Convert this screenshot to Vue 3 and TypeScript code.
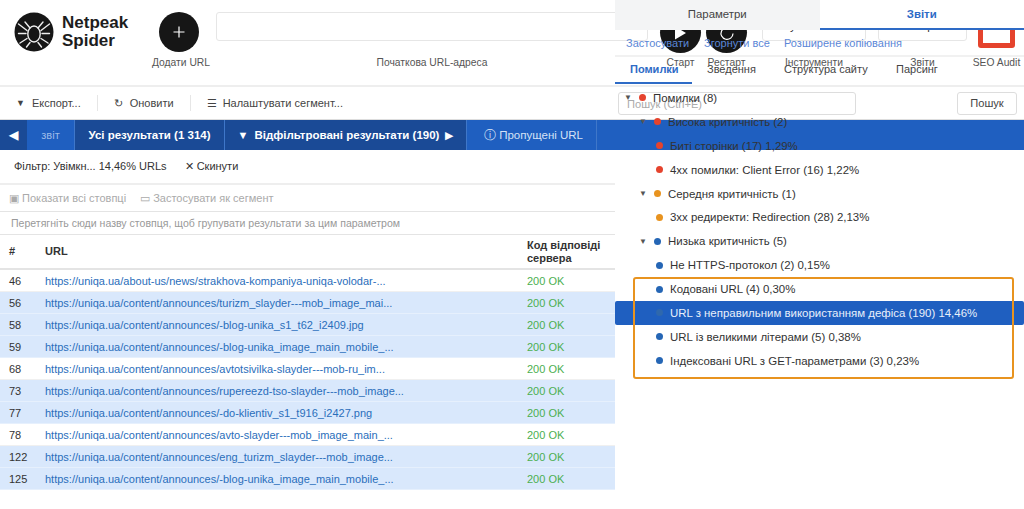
<script setup lang="ts">
interface Row {
  id: number
  url: string
  picked: boolean
}

interface TreeItem {
  label: string
  dot: string
  level: number
  arrow?: boolean
}

const rows: Row[] = [
  { id: 46, url: 'https://uniqa.ua/about-us/news/strakhova-kompaniya-uniqa-volodar-...', picked: false },
  { id: 56, url: 'https://uniqa.ua/content/announces/turizm_slayder---mob_image_mai...', picked: true },
  { id: 58, url: 'https://uniqa.ua/content/announces/-blog-unika_s1_t62_i2409.jpg', picked: true },
  { id: 59, url: 'https://uniqa.ua/content/announces/-blog-unika_image_main_mobile_...', picked: true },
  { id: 68, url: 'https://uniqa.ua/content/announces/avtotsivilka-slayder---mob-ru_im...', picked: false },
  { id: 73, url: 'https://uniqa.ua/content/announces/rupereezd-tso-slayder---mob_image...', picked: true },
  { id: 77, url: 'https://uniqa.ua/content/announces/-do-klientiv_s1_t916_i2427.png', picked: true },
  { id: 78, url: 'https://uniqa.ua/content/announces/avto-slayder---mob_image_main_...', picked: false },
  { id: 122, url: 'https://uniqa.ua/content/announces/eng_turizm_slayder---mob_image...', picked: true },
  { id: 125, url: 'https://uniqa.ua/content/announces/-blog-unika_image_main_mobile_...', picked: true },
]

const red = '#e5432d'
const orange = '#e8931f'
const blue = '#2566b5'

const tree: TreeItem[] = [
  { label: 'Помилки (8)', dot: red, level: 0, arrow: true },
  { label: 'Висока критичність (2)', dot: red, level: 1, arrow: true },
  { label: 'Биті сторінки (17) 1,29%', dot: red, level: 2 },
  { label: '4xx помилки: Client Error (16) 1,22%', dot: red, level: 2 },
  { label: 'Середня критичність (1)', dot: orange, level: 1, arrow: true },
  { label: '3xx редиректи: Redirection (28) 2,13%', dot: orange, level: 2 },
  { label: 'Низька критичність (5)', dot: blue, level: 1, arrow: true },
  { label: 'Не HTTPS-протокол (2) 0,15%', dot: blue, level: 2 },
  { label: 'Кодовані URL (4) 0,30%', dot: blue, level: 2 },
  { label: 'URL з неправильним використанням дефіса (190) 14,46%', dot: blue, level: 2 },
  { label: 'URL із великими літерами (5) 0,38%', dot: blue, level: 2 },
  { label: 'Індексовані URL з GET-параметрами (3) 0,23%', dot: blue, level: 2 },
]
const selected = 9
</script>

<template>
  <div class="page">
    <header class="head">
      <div class="logo">
        <svg width="40" height="40" viewBox="0 0 40 40">
          <circle cx="20" cy="20" r="19.5" fill="#161616" />
          <g fill="none" stroke="#eee" stroke-width="1.4" stroke-linecap="round">
            <ellipse cx="20" cy="22" rx="6.2" ry="8" />
            <path d="M11 10l5 6M29 10l-5 6M4.500 12l8.500 6.500M35.500 12l-8.500 6.500M4.500 21.500h7.500M35.500 21.500h-7.500M6 31l7-4.500M34 31l-7-4.500M12.500 35l3.500-4.500M27.500 35l-3.500-4.500" />
          </g>
        </svg>
        <div class="logo-name">Netpeak<br />Spider</div>
      </div>
      <div class="tool add">
        <span class="round">
          <svg width="12" height="12" viewBox="0 0 12 12"><path d="M6 .5v11M.5 6h11" stroke="#fff" stroke-width="1.2" /></svg>
        </span>
        <span class="cap">Додати URL</span>
      </div>
      <div class="tool address">
        <div class="field"></div>
        <span class="cap">Початкова URL-адреса</span>
      </div>
      <div class="tool start">
        <span class="round">
          <svg width="13" height="14" viewBox="0 0 13 14"><path d="M1 .5l11 6.500-11 6.500z" fill="#fff" /></svg>
        </span>
        <span class="cap">Старт</span>
      </div>
      <div class="tool restart">
        <span class="round">
          <svg width="16" height="16" viewBox="0 0 16 16"><path d="M14 8.500a6 6 0 1 1-2.500-5M12 .5v3.500h-3.500" fill="none" stroke="#fff" stroke-width="1.2" /></svg>
        </span>
        <span class="cap">Рестарт</span>
      </div>
      <div class="tool tools">
        <div class="box">Зупинити</div>
        <span class="cap">Інструменти</span>
      </div>
      <div class="tool reports">
        <div class="box">Експорт</div>
        <span class="cap">Звіти</span>
      </div>
      <div class="tool audit">
        <span class="red-box"></span>
        <span class="cap">SEO Audit</span>
      </div>
    </header>

    <div class="actions">
      <span class="act"><i class="ico small">▼</i>Експорт...</span>
      <span class="act"><i class="ico">↻</i>Оновити</span>
      <span class="act last"><i class="ico">☰</i>Налаштувати сегмент...</span>
      <div class="search-wrap">
        <div class="search">Пошук (Ctrl+E)</div>
        <button class="search-btn" type="button">Пошук</button>
      </div>
    </div>

    <nav class="bar">
      <span class="seg dark back">◀</span>
      <span class="seg light report">звіт</span>
      <span class="seg dark all">Усі результати (1 314)</span>
      <span class="seg dark filtered"><i class="tri">▼</i>Відфільтровані результати (190)<i class="tri">▶</i></span>
      <span class="seg light skipped">ⓘ Пропущені URL</span>
    </nav>

    <section class="left">
      <div class="filter">
        <span>Фільтр: Увімкн... 14,46% URLs</span>
        <span>✕ Скинути</span>
      </div>
      <div class="muted-row">
        <span>▣ Показати всі стовпці</span>
        <span>▭ Застосувати як сегмент</span>
      </div>
      <div class="group-hint">Перетягніть сюди назву стовпця, щоб групувати результати за цим параметром</div>
      <div class="thead">
        <span class="c-id">#</span>
        <span class="c-url">URL</span>
        <span class="c-code">Код відповіді сервера</span>
      </div>
      <div v-for="r in rows" :key="r.id" class="row" :class="{ picked: r.picked }">
        <span class="c-id">{{ r.id }}</span>
        <a class="c-url link">{{ r.url }}</a>
        <span class="c-code ok">200 OK</span>
      </div>
    </section>

    <aside class="side">
      <div class="side-tabs">
        <span class="side-tab params">Параметри</span>
        <span class="side-tab active">Звіти</span>
      </div>
      <div class="side-links">
        <a>Застосувати</a>
        <a>Згорнути все</a>
        <a>Розширене копіювання</a>
      </div>
      <div class="report-tabs">
        <span class="rt on">Помилки</span>
        <span class="rt r2">Зведення</span>
        <span class="rt r3">Структура сайту</span>
        <span class="rt r4">Парсинг</span>
      </div>
      <div class="tree">
        <div
          v-for="(t, i) in tree"
          :key="t.label"
          class="node"
          :class="['lv' + t.level, { sel: i === selected }]"
        >
          <span v-if="t.arrow" class="arrow">▼</span>
          <span class="dot" :style="{ background: i === selected ? '#2f68ad' : t.dot }"></span>
          <span>{{ t.label }}</span>
        </div>
        <div class="outline"></div>
      </div>
    </aside>
  </div>
</template>

<style>
body {
  margin: 0;
  background: #fff;
}
</style>

<style scoped>
.page {
  position: relative;
  width: 1024px;
  height: 509px;
  overflow: hidden;
  font-family: "Liberation Sans", Arial, sans-serif;
  font-size: 11px;
  color: #333;
}

.head {
  display: flex;
  height: 87px;
  box-sizing: border-box;
  padding-top: 12px;
  border-bottom: 2px solid #eee;
}
.logo {
  display: flex;
  width: 159px;
  padding-left: 14px;
  box-sizing: border-box;
  gap: 8px;
}
.logo-name {
  font-size: 17px;
  font-weight: 700;
  line-height: 18px;
  color: #1d1d1d;
  padding-top: 2px;
}
.tool {
  display: flex;
  flex-direction: column;
  align-items: center;
}
.cap {
  position: absolute;
  top: 56px;
  font-size: 10.3px;
  line-height: 13px;
  color: #555;
  white-space: nowrap;
}
.add {
  width: 44px;
  margin-right: 13px;
}
.add .round {
  align-self: flex-start;
  width: 40px;
  height: 40px;
}
.round {
  width: 41px;
  height: 41px;
  border-radius: 50%;
  background: #161616;
  display: flex;
  align-items: center;
  justify-content: center;
}
.address {
  width: 432px;
  margin-right: 12px;
}
.field {
  width: 100%;
  height: 29px;
  box-sizing: border-box;
  border: 1px solid #e6e6e6;
  border-radius: 3px;
}
.start,
.restart {
  width: 41px;
  margin-right: 5px;
}
.restart {
  margin-right: 15px;
}
.tools {
  width: 104px;
  margin-right: 12px;
}
.reports {
  width: 89px;
  margin-right: 11px;
}
.box {
  width: 100%;
  height: 29px;
  box-sizing: border-box;
  border: 1px solid #e6e6e6;
  border-radius: 3px;
  line-height: 27px;
  font-size: 11.5px;
  padding-left: 20px;
}
.reports .box {
  padding-left: 17px;
}
.audit {
  width: 37px;
}
.red-box {
  width: 37px;
  height: 36px;
  box-sizing: border-box;
  border: 5px solid #e5432d;
  border-radius: 3px;
}

.actions {
  display: flex;
  align-items: center;
  height: 33px;
  box-sizing: border-box;
  border-bottom: 1px solid #ddd;
  color: #444;
  font-size: 11px;
}
.act {
  display: flex;
  gap: 7px;
  padding: 0 16px;
  line-height: 16px;
  border-right: 1px solid #e6e6e6;
}
.act.last {
  border-right: 0;
}
.ico {
  width: 9px;
  font-style: normal;
  text-align: center;
}
.ico.small {
  font-size: 9px;
}
.search-wrap {
  margin-left: auto;
  display: flex;
  justify-content: space-between;
  width: 399px;
  margin-right: 7px;
  font-size: 11.1px;
}
.search {
  width: 238px;
  height: 23px;
  box-sizing: border-box;
  border: 1px solid #ddd;
  border-radius: 3px;
  color: #aaa;
  line-height: 22px;
  padding-left: 8px;
}
.search-btn {
  width: 60px;
  height: 23px;
  background: #fff;
  border: 1px solid #ddd;
  border-radius: 3px;
  color: #444;
  font: inherit;
  padding: 0;
}

.bar {
  display: flex;
  height: 30px;
  background: #1f5fc0;
  color: #fff;
  font-size: 11.5px;
  line-height: 30px;
}
.seg {
  box-sizing: border-box;
  white-space: nowrap;
  text-align: center;
  border-right: 1px solid #3f77c9;
}
.dark {
  background: #1a4a96;
  font-weight: 700;
}
.back {
  width: 27px;
  border-right: 0;
}
.report {
  width: 48px;
  color: #9dbbe8;
  font-size: 11px;
}
.all {
  width: 150px;
}
.filtered {
  width: 242px;
  display: flex;
  justify-content: center;
  gap: 6px;
}
.tri {
  font-style: normal;
  font-weight: 400;
  font-size: 11px;
}
.skipped {
  width: 130px;
  padding-left: 4px;
  color: #d5e2f6;
}

.left {
  width: 615px;
}
.filter {
  display: flex;
  gap: 18px;
  height: 35px;
  box-sizing: border-box;
  align-items: center;
  padding-left: 14px;
  padding-bottom: 1px;
  border-bottom: 2px solid #eee;
}
.muted-row {
  display: flex;
  gap: 14px;
  height: 27px;
  box-sizing: border-box;
  align-items: center;
  padding-left: 9px;
  color: #aaa;
  border-bottom: 1px solid #e4e4e4;
}
.group-hint {
  height: 23px;
  box-sizing: border-box;
  line-height: 22px;
  padding-left: 11px;
  font-size: 10.55px;
  color: #999;
  border-bottom: 1px solid #e4e4e4;
}
.thead,
.row {
  display: grid;
  grid-template-columns: 36px 482px 1fr;
  padding-left: 9px;
  align-items: center;
  box-sizing: border-box;
}
.thead {
  height: 35px;
  font-weight: 700;
  line-height: 13px;
  border-bottom: 2px solid #e4e4e4;
}
.c-code {
  width: 88px;
}
.row {
  height: 22px;
  font-size: 11px;
  border-bottom: 1px solid #f0f0f0;
}
.picked {
  background: #d9e8fc;
  border-bottom-color: #e6f0fd;
}
.link {
  color: #2a6ebb;
  white-space: nowrap;
}
.ok {
  color: #4caf50;
}

.side {
  position: absolute;
  left: 615px;
  top: 0;
  width: 409px;
}
.side-tabs {
  display: flex;
  height: 30px;
}
.side-tab {
  width: 50%;
  text-align: center;
  line-height: 29px;
  font-size: 11.4px;
  box-sizing: border-box;
}
.params {
  background: #f3f4f5;
  color: #444;
}
.active {
  background: #fff;
  color: #2e6bc6;
  font-weight: 700;
  border-bottom: 2px solid #2e6bc6;
}
.side-links {
  display: flex;
  height: 27px;
  box-sizing: border-box;
  padding-left: 11px;
  align-items: center;
  font-size: 11px;
  color: #5b86d6;
  border-bottom: 2px solid #f1f1f1;
}
.side-links a:nth-child(1) {
  width: 78px;
}
.side-links a:nth-child(2) {
  width: 80px;
}
.report-tabs {
  height: 27px;
  font-size: 11px;
  line-height: 24px;
  position: relative;
}
.rt {
  position: absolute;
  top: 0;
  color: #444;
  white-space: nowrap;
}
.on {
  left: 0;
  width: 77px;
  height: 27px;
  box-sizing: border-box;
  padding-left: 15px;
  color: #2e6bc6;
  font-weight: 700;
  border-bottom: 2px solid #2e6bc6;
}
.r2 {
  left: 92px;
}
.r3 {
  left: 169px;
}
.r4 {
  left: 281px;
}
.tree {
  position: relative;
  padding-top: 2px;
}
.node {
  display: flex;
  align-items: center;
  height: 23.9px;
  font-size: 11.45px;
  color: #333;
  white-space: nowrap;
}
.arrow {
  font-size: 8px;
  color: #555;
  width: 11px;
  margin-right: 4px;
}
.dot {
  width: 7px;
  height: 7px;
  border-radius: 50%;
  margin-right: 7px;
  flex: none;
}
.lv0 {
  padding-left: 9px;
}
.lv1 {
  padding-left: 24px;
}
.lv2 {
  padding-left: 41px;
}
.sel {
  background: #1f5fc0;
  color: #e8f0fb;
  border-radius: 2px;
}
.outline {
  position: absolute;
  left: 18px;
  top: 193px;
  width: 381px;
  height: 102px;
  box-sizing: border-box;
  border: 2px solid #e8931f;
  border-radius: 3px;
  pointer-events: none;
}
</style>
